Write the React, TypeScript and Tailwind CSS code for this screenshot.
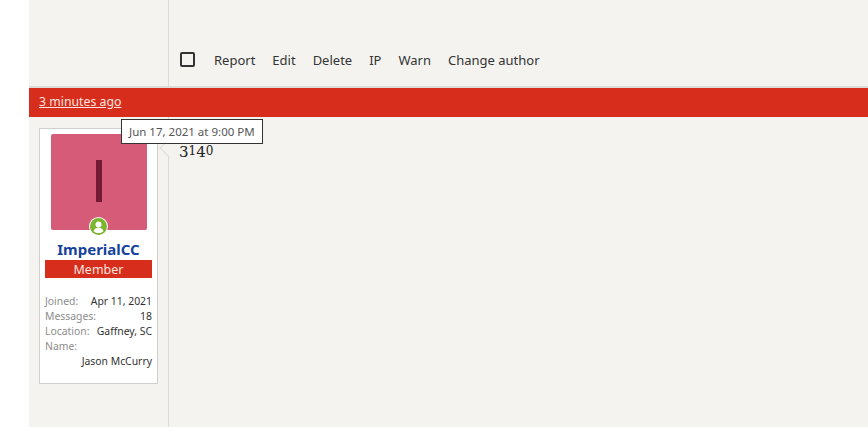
import React from 'react';

const font = { fontFamily: '"Noto Sans", sans-serif' };

const actions = ['Report', 'Edit', 'Delete', 'IP', 'Warn', 'Change author'];

const stats: [string, string][] = [
  ['Joined:', 'Apr 11, 2021'],
  ['Messages:', '18'],
  ['Location:', 'Gaffney, SC'],
];

function UserBadge() {
  return (
    <div className="w-[119px] h-[256px] bg-white border border-[#cfcfcf] px-[5px] pt-[5px]">
      <div className="relative w-[96px] h-[96px] mx-auto bg-[#d55b78] rounded-[2px] flex items-center justify-center">
        <div className="w-[6px] h-[42px] mb-[2px] bg-[#741a34]" />
        <div className="absolute left-[38px] top-[83px] w-[19px] h-[19px] rounded-full bg-white flex items-center justify-center">
          <svg width="17" height="17" viewBox="0 0 17 17">
            <circle cx="8.5" cy="8.5" r="8.5" fill="#7db52c" />
            <circle cx="8.5" cy="6.5" r="3" fill="#ffffff" />
            <path d="M3.6 13.2c.6-2.4 2.6-3.4 4.9-3.4s4.3 1 4.9 3.4c-1.3 1.2-3 1.9-4.9 1.9s-3.6-.7-4.9-1.9z" fill="#ffffff" />
          </svg>
        </div>
      </div>
      <div className="mt-[9px] text-center text-[15px] leading-[20px] font-bold text-[#15439b]">ImperialCC</div>
      <div className="mt-[1px] h-[18px] bg-[#d72d1c] text-center text-[12.5px] leading-[19px] text-[#fbe4df]">Member</div>
      <div className="mt-[16px] text-[10.4px] leading-[15px] text-[#333333]">
        {stats.map(([label, value]) => (
          <div key={label} className="flex justify-between">
            <span className="text-[#8c8c8c]">{label}</span>
            <span>{value}</span>
          </div>
        ))}
        <div className="text-[#8c8c8c]">Name:</div>
        <div className="text-right">Jason McCurry</div>
      </div>
    </div>
  );
}

export default function App() {
  return (
    <div className="w-[868px] h-[427px] overflow-hidden bg-white flex text-[#333333]" style={font}>
      <div className="w-[29px] shrink-0 bg-white" />
      <div className="flex-1 bg-[#f4f3f0] flex flex-col">
        <div className="h-[88px] shrink-0 flex border-b-2 border-[#dcdbd8]">
          <div className="w-[140px] border-r border-[#dcdbd8]" />
          <div className="flex-1 flex items-center pt-[33px] pl-[11px] text-[13px]">
            <div className="w-[15px] h-[15px] border-2 border-[#333333] rounded-[2px] mr-[19px]" />
            <div className="flex gap-[17px] pt-[2px]">
              {actions.map((a) => (
                <span key={a}>{a}</span>
              ))}
            </div>
          </div>
        </div>
        <div className="h-[29px] shrink-0 bg-[#d72d1c] pl-[10px] flex items-center text-[12.3px] text-[#fbe4df] underline">
          3 minutes ago
        </div>
        <div className="flex-1 flex relative">
          <div className="w-[140px] border-r border-[#dcdbd8] pl-[10px] pt-[11px]">
            <UserBadge />
          </div>
          <div className="absolute left-[133px] top-[25px] w-[12px] h-[12px] rotate-45 bg-[#f4f3f0] border-l border-b border-[#dcdbd8]" />
          <div className="pl-[10px] pt-[21px] text-[15px] leading-[24px] text-[#222222]" style={{ fontFamily: '"DejaVu Serif", serif' }}>
            <span className="align-[-2px]">3</span>
            <span className="text-[12px]">1</span>
            <span className="align-[-2px]">4</span>
            <span className="text-[12px]">0</span>
          </div>
          <div className="absolute left-[92px] top-[2px] h-[25px] px-[7px] bg-white border border-[#333333] text-[11.5px] leading-[23px] text-[#555555] whitespace-nowrap">
            Jun 17, 2021 at 9:00 PM
          </div>
        </div>
      </div>
    </div>
  );
}
